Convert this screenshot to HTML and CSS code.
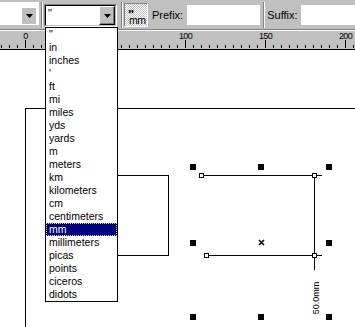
FILE: index.html
```html
<!DOCTYPE html>
<html>
<head>
<meta charset="utf-8">
<link rel="stylesheet" href="styles.css">
</head>
<body>
<div class="toolbar">
  <div class="combo1"><div class="btn"><svg class="arrow" width="7" height="4" viewBox="0 0 7 4"><path d="M0 0H7L3.5 4Z"/></svg></div></div>
  <div class="sep s1"></div>
  <div class="combo2"><div class="inner"><div class="field">"</div><div class="btn"><svg class="arrow" width="7" height="4" viewBox="0 0 7 4"><path d="M0 0H7L3.5 4Z"/></svg></div></div></div>
  <div class="sep s2"></div>
  <div class="tbtn"><div class="q">"</div><div class="m">mm</div></div>
  <span class="label lp">Prefix:</span>
  <div class="input ip"></div>
  <div class="sep s3"></div>
  <span class="label ls">Suffix:</span>
  <div class="input is"></div>
</div>
<div class="ruler">
  <svg width="355" height="18" viewBox="0 31 355 18" shape-rendering="crispEdges">
    <g class="ticks">
      <rect x="1" y="45" width="1" height="3"/><rect x="9" y="45" width="1" height="3"/><rect x="17" y="45" width="1" height="3"/>
      <rect x="25" y="40" width="1" height="8"/>
      <rect x="33" y="45" width="1" height="3"/><rect x="41" y="45" width="1" height="3"/><rect x="49" y="45" width="1" height="3"/><rect x="57" y="45" width="1" height="3"/><rect x="65" y="45" width="1" height="3"/><rect x="73" y="45" width="1" height="3"/><rect x="81" y="45" width="1" height="3"/><rect x="89" y="45" width="1" height="3"/><rect x="97" y="45" width="1" height="3"/>
      <rect x="105" y="40" width="1" height="8"/>
      <rect x="113" y="45" width="1" height="3"/><rect x="121" y="45" width="1" height="3"/><rect x="129" y="45" width="1" height="3"/><rect x="137" y="45" width="1" height="3"/><rect x="145" y="45" width="1" height="3"/><rect x="153" y="45" width="1" height="3"/><rect x="161" y="45" width="1" height="3"/><rect x="169" y="45" width="1" height="3"/><rect x="177" y="45" width="1" height="3"/>
      <rect x="185" y="40" width="1" height="8"/>
      <rect x="193" y="45" width="1" height="3"/><rect x="201" y="45" width="1" height="3"/><rect x="209" y="45" width="1" height="3"/><rect x="217" y="45" width="1" height="3"/><rect x="225" y="45" width="1" height="3"/><rect x="233" y="45" width="1" height="3"/><rect x="241" y="45" width="1" height="3"/><rect x="249" y="45" width="1" height="3"/><rect x="257" y="45" width="1" height="3"/>
      <rect x="265" y="40" width="1" height="8"/>
      <rect x="273" y="45" width="1" height="3"/><rect x="281" y="45" width="1" height="3"/><rect x="289" y="45" width="1" height="3"/><rect x="297" y="45" width="1" height="3"/><rect x="305" y="45" width="1" height="3"/><rect x="313" y="45" width="1" height="3"/><rect x="321" y="45" width="1" height="3"/><rect x="329" y="45" width="1" height="3"/><rect x="337" y="45" width="1" height="3"/>
      <rect x="345" y="40" width="1" height="8"/>
      <rect x="353" y="45" width="1" height="3"/>
    </g>
    <g class="nums">
      <text x="25.5" y="39">0</text>
      <text x="105.5" y="39">50</text>
      <text x="185.5" y="39">100</text>
      <text x="265.5" y="39">150</text>
      <text x="345.5" y="39">200</text>
    </g>
  </svg>
</div>
<div class="canvas">
  <svg width="355" height="277" viewBox="0 50 355 277">
    <g class="lines" fill="none" stroke="#000" stroke-width="1" shape-rendering="crispEdges">
      <path d="M25.5 108V327"/>
      <path d="M25 108.5H355"/>
      <path d="M90 175.5H168.5V255.5H90"/>
      <path d="M203 175.5H322"/>
      <path d="M208 255.5H322"/>
      <path d="M314.5 175V270"/>
    </g>
    <g class="nodes" fill="#fff" stroke="#000" stroke-width="1" shape-rendering="crispEdges">
      <rect x="199.5" y="173.5" width="4" height="4"/>
      <rect x="312.5" y="173.5" width="4" height="4"/>
      <rect x="204.5" y="253.5" width="4" height="4"/>
      <rect x="312.5" y="253.5" width="4" height="4"/>
    </g>
    <g class="handles" fill="#000" shape-rendering="crispEdges">
      <rect x="190" y="164" width="6" height="6"/>
      <rect x="258" y="164" width="6" height="6"/>
      <rect x="326" y="164" width="6" height="6"/>
      <rect x="190" y="240" width="6" height="6"/>
      <rect x="326" y="240" width="6" height="6"/>
      <rect x="190" y="314" width="6" height="6"/>
      <rect x="258" y="314" width="6" height="6"/>
      <rect x="326" y="314" width="6" height="6"/>
    </g>
    <path d="M259 240L264 245M264 240L259 245" stroke="#000" stroke-width="1.6" fill="none"/>
    <text class="dim" x="0" y="0" transform="translate(319 298) rotate(-90)">50.0mm</text>
  </svg>
</div>
<div class="dropdown">
  <div class="opt">"</div>
  <div class="opt">in</div>
  <div class="opt">inches</div>
  <div class="opt">'</div>
  <div class="opt">ft</div>
  <div class="opt">mi</div>
  <div class="opt">miles</div>
  <div class="opt">yds</div>
  <div class="opt">yards</div>
  <div class="opt">m</div>
  <div class="opt">meters</div>
  <div class="opt">km</div>
  <div class="opt">kilometers</div>
  <div class="opt">cm</div>
  <div class="opt">centimeters</div>
  <div class="opt sel">mm</div>
  <div class="opt">millimeters</div>
  <div class="opt">picas</div>
  <div class="opt">points</div>
  <div class="opt">ciceros</div>
  <div class="opt">didots</div>
</div>
</body>
</html>
```
FILE: styles.css
```css
* { box-sizing: border-box; }
html, body { margin: 0; padding: 0; }
body {
  width: 355px;
  height: 327px;
  overflow: hidden;
  position: relative;
  background: #fff;
  font-family: "Liberation Sans", Arial, sans-serif;
  font-size: 11px;
  color: #000;
}
.toolbar {
  display: flex;
  align-items: flex-start;
  height: 30px;
  background: #c0c0c0;
  border-bottom: 1px solid #808080;
}
.combo1 {
  margin-top: 2px;
  width: 39px;
  height: 23px;
  background: #fff;
  display: flex;
  padding: 6px 3px 1px 22px;
}
.combo1 .btn {
  width: 14px;
  background: #c0c0c0;
  display: flex;
  align-items: center;
  justify-content: center;
}
.arrow { display: block; }
.arrow path { fill: #000; }
.sep {
  width: 2px;
  height: 26px;
  margin-top: 2px;
  border-left: 1px solid #808080;
  border-right: 1px solid #fff;
}
.s1 { margin-left: 2px; margin-right: 1px; }
.s2 { margin-left: 4px; margin-right: 1px; }
.s3 { margin-left: 3px; margin-right: 2px; }
.combo2 {
  margin-top: 4px;
  width: 73px;
  height: 23px;
  border: 1px solid;
  border-color: #808080 #fff #fff #808080;
}
.combo2 .inner {
  height: 100%;
  display: flex;
  background: #fff;
  border: 1px solid;
  border-color: #000 #c0c0c0 #c0c0c0 #000;
}
.combo2 .field {
  flex: 1;
  padding-left: 2px;
  line-height: 15px;
}
.combo2 .btn {
  width: 16px;
  background: #c0c0c0;
  border: 1px solid;
  border-color: #fff #000 #000 #fff;
  box-shadow: inset -1px -1px #808080;
  display: flex;
  align-items: center;
  justify-content: center;
}
.tbtn {
  margin-top: 3px;
  width: 24px;
  height: 24px;
  border: 1px solid;
  border-color: #808080 #fff #fff #808080;
  background-color: #fff;
  background-image: repeating-conic-gradient(#c0c0c0 0 25%, #fff 0 50%);
  background-size: 2px 2px;
  padding-top: 7px;
}
.tbtn .q {
  height: 8px;
  line-height: 8px;
  font-size: 13px;
  font-weight: bold;
  padding-left: 3px;
}
.tbtn .m {
  margin-top: -3px;
  line-height: 9px;
  font-size: 10.5px;
  letter-spacing: -0.4px;
  padding-left: 4px;
}
.label {
  margin-top: 5px;
  line-height: 20px;
}
.lp { margin-left: 4px; }
.ls { margin-left: 0; }
.input {
  margin-top: 5px;
  height: 20px;
  background: #fff;
}
.ip { width: 73px; margin-left: 4px; }
.is { flex: 1; margin-left: 3px; }
.ruler {
  height: 20px;
  background: #c0c0c0;
  border-top: 1px solid #fff;
  border-bottom: 1px solid #000;
}
.ruler svg { display: block; }
.ticks rect { fill: #000; }
.nums text {
  font-family: "Liberation Sans", Arial, sans-serif;
  font-size: 9px;
  letter-spacing: -0.6px;
  text-anchor: middle;
  fill: #000;
}
.canvas svg { display: block; }
.dim {
  font-family: "Liberation Sans", Arial, sans-serif;
  font-size: 9px;
  text-anchor: middle;
  fill: #000;
}
.dropdown {
  position: absolute;
  left: 45px;
  top: 27px;
  width: 73px;
  border: 1px solid #000;
  background: #fff;
}
.opt {
  height: 13px;
  line-height: 13px;
  padding-left: 3px;
  font-size: 10.5px;
  white-space: nowrap;
}
.opt.sel {
  background: #000080;
  color: #fff;
  border: 1px dotted #e0e080;
  line-height: 11px;
  padding-left: 2px;
}
```
